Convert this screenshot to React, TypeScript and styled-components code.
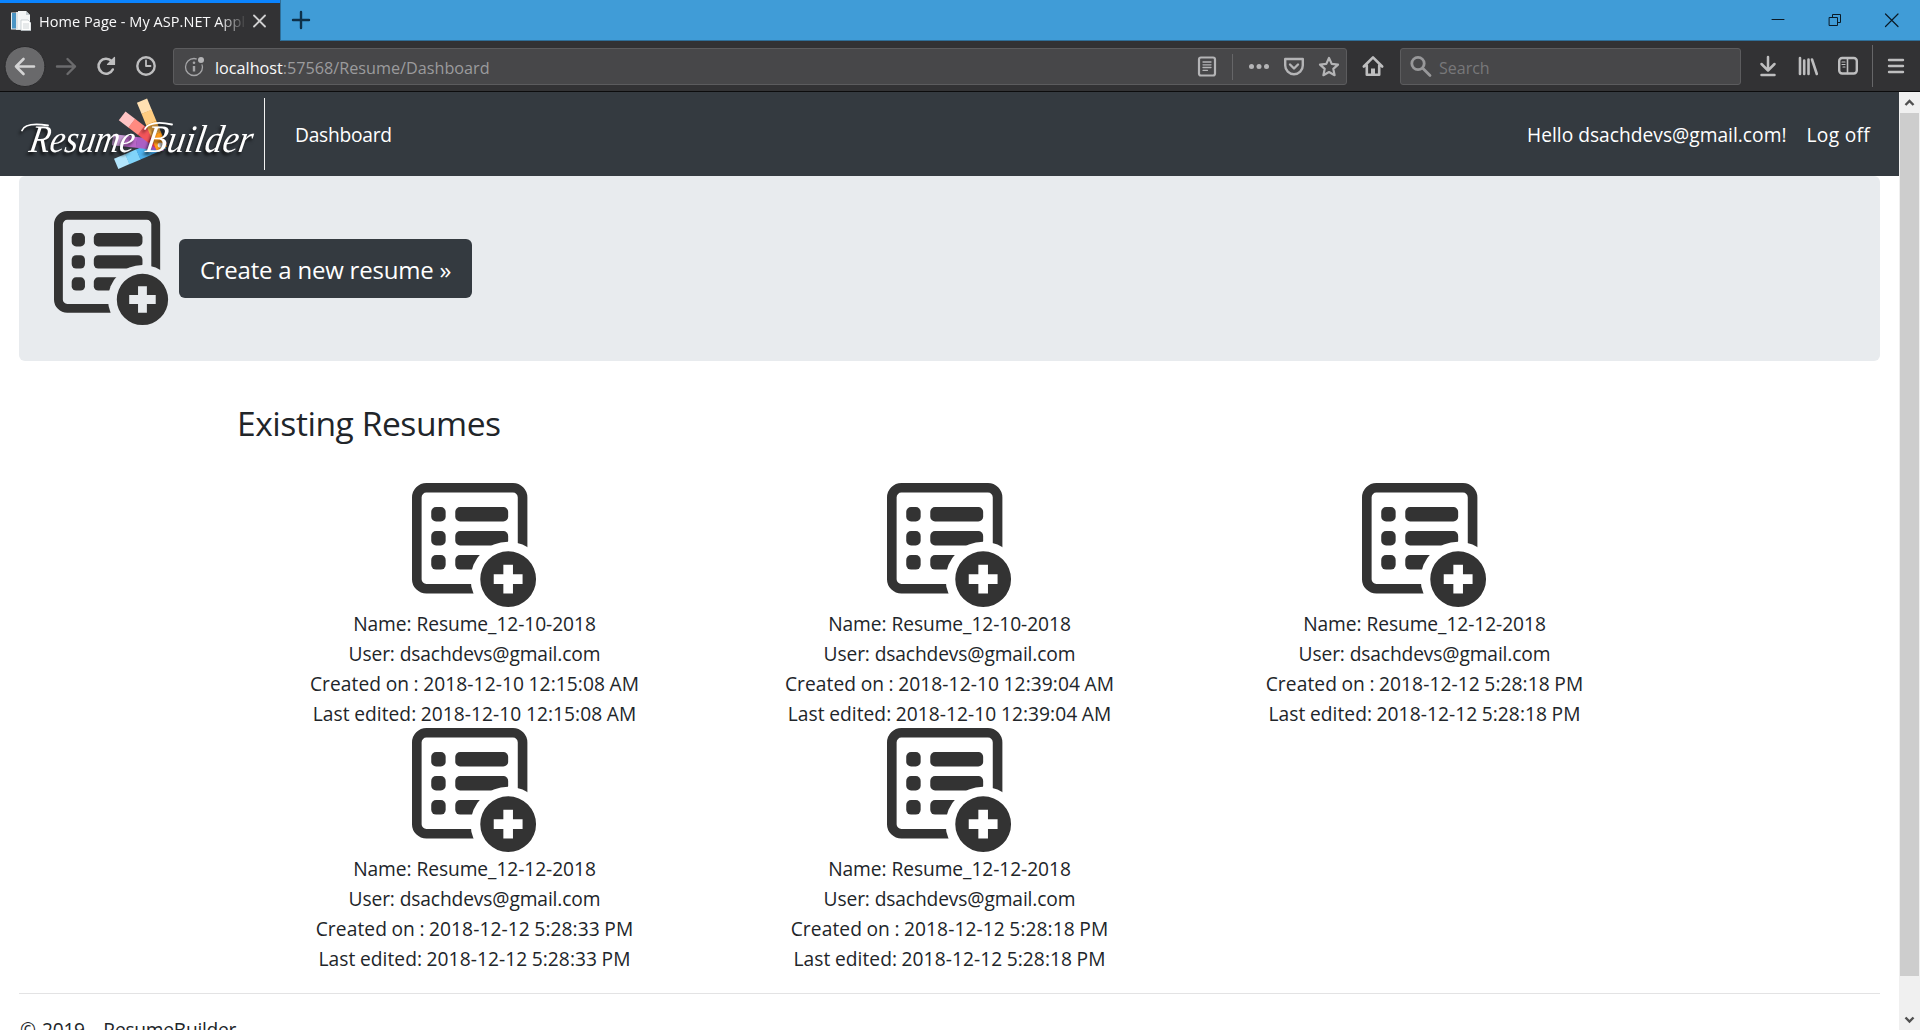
import React from "react";
import styled, { createGlobalStyle } from "styled-components";

const GlobalStyle = createGlobalStyle`
  *, *::before, *::after { box-sizing: border-box; }
  html, body { margin: 0; padding: 0; background: #fff; overflow: hidden; }
  body { font-family: "Open Sans", "Noto Sans", sans-serif; color: #212529; }
  svg { display: block; flex: none; }
`;

const Window = styled.div`
  display: flex;
  flex-direction: column;
  width: 1920px;
  height: 1030px;
  overflow: hidden;
`;

/* ---------- browser chrome ---------- */

const TitleBar = styled.header`
  display: flex;
  height: 41px;
  background: #409cd7;
`;

const Tab = styled.div`
  display: flex;
  align-items: center;
  width: 280px;
  padding: 0 11px 0 11px;
  border-top: 3px solid #0a84ff;
  background: #323234;
`;

const TabTitle = styled.span`
  width: 208px;
  margin: 0 5px 1px 8px;
  overflow: hidden;
  white-space: nowrap;
  font-size: 14.5px;
  line-height: 24px;
  letter-spacing: 0.05px;
  color: #f9f9fa;
  mask-image: linear-gradient(to right, #000 180px, transparent 208px);
`;

const TabStrip = styled.div`
  display: flex;
  flex: 1;
  align-items: center;
  border-left: 1px solid #2f6f99;
  border-bottom: 1px solid #2f6f99;
  padding: 0 16px 0 8px;
`;

const WindowButtons = styled.div`
  display: flex;
  gap: 33px;
  margin-left: auto;
`;

const Toolbar = styled.div`
  display: flex;
  align-items: center;
  height: 51px;
  padding-left: 4px;
  background: #323234;
  border-bottom: 1px solid #0c0c0d;
`;

const Slot = styled.span<{ $left?: number }>`
  flex: none;
  margin-left: ${(p) => p.$left ?? 0}px;
`;

const Field = styled.div<{ $width: number }>`
  display: flex;
  align-items: center;
  flex: none;
  width: ${(p) => p.$width}px;
  height: 37px;
  margin: 1px 0 0 15px;
  padding: 0 5px 0 8px;
  background: #474749;
  border: 1px solid #5c5c5e;
  border-radius: 3px;
`;

const Url = styled.span`
  flex: 1;
  margin: 2px 0 0 9px;
  font-size: 16.2px;
  line-height: 24px;
  color: #9b9b9d;
`;

const Host = styled.span`
  color: #f9f9fa;
`;

const Placeholder = styled.span`
  margin: 2px 0 0 6px;
  font-size: 16px;
  line-height: 24px;
  color: #78787a;
`;

const Divider = styled.span<{ $height: number; $left: number; $right: number }>`
  width: 1px;
  height: ${(p) => p.$height}px;
  margin: 0 ${(p) => p.$right}px 0 ${(p) => p.$left}px;
  background: #666668;
`;

/* ---------- page ---------- */

const Viewport = styled.div`
  display: flex;
  flex: 1;
  min-height: 0;
`;

const Page = styled.div`
  flex: 1;
  overflow: hidden;
  background: #fff;
`;

const Navbar = styled.nav`
  display: flex;
  align-items: center;
  height: 84px;
  padding: 0 29px 0 19px;
  background: #343a40;
`;

const Brand = styled.a`
  display: block;
  width: 246px;
  height: 72px;
  border-right: 1px solid #f1f1f1;
`;

const NavText = styled.a<{ $left: number; $track?: number }>`
  margin-left: ${(p) => p.$left}px;
  padding-top: 1px;
  font-size: 19.2px;
  line-height: 30px;
  letter-spacing: ${(p) => p.$track ?? 0}px;
  color: #fff;
  white-space: nowrap;
`;

const Account = styled.div`
  display: flex;
  margin-left: auto;
`;

const Body = styled.main`
  padding: 0 19px;
`;

const Jumbotron = styled.section`
  display: flex;
  align-items: center;
  gap: 10px;
  height: 185px;
  padding: 0 35px 0;
  border-radius: 6px;
  background: #e8ebee;
`;

const CreateButton = styled.a`
  width: 293px;
  height: 59px;
  padding-top: 2px;
  border-radius: 6px;
  background: #343a40;
  color: #fff;
  font-size: 24px;
  line-height: 58px;
  letter-spacing: -0.22px;
  text-align: center;
`;

const Container = styled.section`
  width: 1425px;
  margin: 41px 0 0 218px;
`;

const Heading = styled.h2`
  margin: 0 0 39px;
  font-size: 33.6px;
  font-weight: 400;
  line-height: 42px;
  letter-spacing: -0.45px;
`;

const Grid = styled.div`
  display: grid;
  grid-template-columns: repeat(3, 475px);
  grid-auto-rows: 245px;
`;

const Card = styled.article`
  display: flex;
  flex-direction: column;
  align-items: center;
`;

const CardLine = styled.div<{ $track: number; $words?: number }>`
  position: relative;
  top: 1px;
  font-size: 19.2px;
  line-height: 30px;
  letter-spacing: ${(p) => p.$track}px;
  word-spacing: ${(p) => p.$words ?? 0}px;
  white-space: nowrap;
`;

const Rule = styled.hr`
  height: 1px;
  margin: 20px 0;
  border: 0;
  background: #e3e3e4;
`;

const Footer = styled.footer`
  padding: 1px 0 0 1px;
  font-size: 19.2px;
  line-height: 30px;
  letter-spacing: -0.27px;
  word-spacing: 1.6px;
`;

const Scrollbar = styled.div`
  display: flex;
  flex-direction: column;
  align-items: center;
  justify-content: space-between;
  width: 21px;
  padding: 0 1px;
  background: #f0f0f0;
`;

const Thumb = styled.div`
  width: 19px;
  height: 863px;
  margin-bottom: 33px;
  background: #cdcdcd;
`;

/* ---------- drawings ---------- */

const Icon = ({ size = 24, color = "#bebebf", width = 2.4, children }: {
  size?: number; color?: string; width?: number; children: React.ReactNode;
}) => (
  <svg width={size} height={size} viewBox={`0 0 ${size} ${size}`} fill="none" stroke={color}
    strokeWidth={width} strokeLinecap="round" strokeLinejoin="round">
    {children}
  </svg>
);

const FaviconDrawing = styled.svg`
  margin-bottom: 3px;
`;

const Favicon = () => (
  <FaviconDrawing width="20" height="20" viewBox="0 0 20 20">
    <rect x="0" y="1.5" width="10" height="17" fill="#e9eef2" />
    <rect x="1" y="2" width="4" height="15.5" fill="#4b94c4" />
    <path d="M5 1h9l4 4v14H5z" fill="#dfe3e6" />
    <path d="M7 0h8l4 4v14H7z" fill="#f3f5f6" />
    <path d="M15 0v4h4z" fill="#c3cbd0" />
    <path d="M10 9h7l3 3v7.500H10z" fill="#fdfdfd" stroke="#b9c1c6" strokeWidth=".7" />
    <path d="M12 13h6M12 15h6M12 17h6" stroke="#c4cace" strokeWidth=".8" />
  </FaviconDrawing>
);

const ResumeIcon = ({ size, id }: { size: number; id: string }) => (
  <svg width={size} height={size} viewBox="0 0 26 26" fill="#333">
    <mask id={id}>
      <rect width="26" height="26" fill="#fff" />
      <circle cx="20" cy="20" r="7.8" fill="#000" />
    </mask>
    <g mask={`url(#${id})`}>
      <path fillRule="evenodd" d="M3 0h18a3 3 0 0 1 3 3v17a3 3 0 0 1-3 3H3a3 3 0 0 1-3-3V3a3 3 0 0 1 3-3zm0 2a1 1 0 0 0-1 1v17a1 1 0 0 0 1 1h18a1 1 0 0 0 1-1V3a1 1 0 0 0-1-1z" />
      {[5, 10, 15].map((y) => (
        <React.Fragment key={y}>
          <rect x="4" y={y} width="3" height="3" rx="1" />
          <rect x="9" y={y} width="11" height="3" rx="1" />
        </React.Fragment>
      ))}
    </g>
    <path fillRule="evenodd" d="M20 14.200a5.800 5.800 0 1 1 0 11.600a5.800 5.800 0 1 1 0-11.600zM19 17v2h-2v2h2v2h2v-2h2v-2h-2v-2z" />
  </svg>
);

const swatches = [
  { angle: -23.2, tones: ["#b3e5fc", "#81d4fa", "#4fb4f0", "#42a5e8"] },
  { angle: 6.3, tones: ["#c79bd6", "#ba68c8", "#ab5fc4", "#9c4fb8"] },
  { angle: 37.4, tones: ["#ffc4c4", "#ff8a80", "#f2555a", "#e53948"] },
  { angle: 67.6, tones: ["#ffe0b2", "#ffcc80", "#ffb547", "#ff9c1a"] },
];

const LogoText = styled.text`
  font-family: "Liberation Serif", serif;
  font-style: italic;
  font-size: 39px;
  fill: #fff;
`;

const LogoDrawing = styled.svg`
  margin-top: -4px;
  overflow: visible;
`;

const Lettering = styled.g`
  filter: drop-shadow(-2px 3px 1.5px rgba(0, 0, 0, 0.65));
`;

const Logo = () => (
  <LogoDrawing width="240" height="76" viewBox="19 94 240 76">
    <g transform="translate(160.3 145)">
      {swatches.map(({ angle, tones }) => (
        <g key={angle} transform={`rotate(${angle})`}>
          {tones.map((tone, i) => (
            <rect key={tone} x={-48 + i * 12} y="-5.500" width={i === 3 ? 16 : 12.3} height="11" fill={tone} />
          ))}
        </g>
      ))}
      <circle r="5.500" fill="#ff9c1a" />
      <circle r="2.600" fill="#fff" />
    </g>
    <Lettering>
      <g transform="translate(0 151.5) skewX(-10)">
        <LogoText x="28" y="0" textLength="105" lengthAdjust="spacingAndGlyphs">Resume</LogoText>
        <LogoText x="144" y="0" textLength="107" lengthAdjust="spacingAndGlyphs">Builder</LogoText>
      </g>
      <path d="M22 130.500C24 125.500 32 123 48 125.500M145 129C147 124 156 121 172 124.500" fill="none" stroke="#fff"
        strokeWidth="1.800" strokeLinecap="round" />
    </Lettering>
  </LogoDrawing>
);

/* ---------- data ---------- */

const resumes = [
  { name: "Resume_12-10-2018", stamp: "2018-12-10 12:15:08 AM" },
  { name: "Resume_12-10-2018", stamp: "2018-12-10 12:39:04 AM" },
  { name: "Resume_12-12-2018", stamp: "2018-12-12 5:28:18 PM" },
  { name: "Resume_12-12-2018", stamp: "2018-12-12 5:28:33 PM" },
  { name: "Resume_12-12-2018", stamp: "2018-12-12 5:28:18 PM" },
];

export default function App() {
  return (
    <Window>
      <GlobalStyle />
      <TitleBar>
        <Tab>
          <Favicon />
          <TabTitle>Home Page - My ASP.NET Appl</TabTitle>
          <Icon size={18} width={1.8} color="#d0d0d1"><path d="M3 2.500l11 11M14 2.500L3 13.500" /></Icon>
        </Tab>
        <TabStrip>
          <Icon color="#0d3049" width={2.4}><path d="M12 4v16M4 12h16" /></Icon>
          <WindowButtons>
            <Icon color="#0a1a26" width={1}><path d="M6 11.500h12" /></Icon>
            <Icon color="#0a1a26" width={1}><path d="M6.500 9.500h8v8h-8zM9.500 9.500v-3h8v8h-3" /></Icon>
            <Icon color="#0a1a26" width={1.2}><path d="M5.500 6l12.500 12.500M18 6L5.500 18.500" /></Icon>
          </WindowButtons>
        </TabStrip>
      </TitleBar>

      <Toolbar>
        <Slot>
          <Icon size={42} width={2.6} color="#d3d3d4">
            <circle cx="21" cy="21.500" r="20" fill="#69696b" stroke="#2a2a2c" strokeWidth="1" />
            <path d="M12 21.500h18M19.500 14l-7.500 7.500 7.500 7.500" />
          </Icon>
        </Slot>
        <Slot $left={8}>
          <Icon color="#6b6b6d"><path d="M3 12.500h18M13.500 5l7.500 7.500-7.500 7.500" /></Icon>
        </Slot>
        <Slot $left={16}>
          <Icon width={2.6}>
            <path d="M18.800 15.500A7.500 7.500 0 1 1 17.500 7" />
            <path d="M20.500 3.500v7h-7z" fill="#bebebf" strokeWidth="1.200" />
          </Icon>
        </Slot>
        <Slot $left={16}>
          <Icon><circle cx="12" cy="12" r="8.700" /><path d="M12 6.500V12h4.500" strokeWidth="1.800" /></Icon>
        </Slot>

        <Field $width={1174}>
          <Icon color="#a5a5a7" width={1.3}>
            <circle cx="12" cy="12" r="8.500" />
            <circle cx="19" cy="5" r="4.500" fill="#474749" stroke="none" />
            <circle cx="19" cy="5" r="3" fill="#b4b4b6" stroke="none" />
            <path d="M12 11v5.500" strokeWidth="2.400" strokeLinecap="butt" />
            <circle cx="12" cy="7.800" r="1.300" fill="#a5a5a7" stroke="none" />
          </Icon>
          <Url><Host>localhost</Host>:57568/Resume/Dashboard</Url>
          <Icon color="#b4b4b6" width={2.2}>
            <rect x="3" y="2.500" width="16" height="18" rx="2" />
            <path d="M7 7h8M7 9.800h8M7 12.500h8M7 15.300h4.500" strokeWidth="1.300" />
          </Icon>
          <Divider $height={26} $left={12} $right={14} />
          <Icon color="#b4b4b6">
            {[4.5, 12, 19.5].map((x) => (
              <circle key={x} cx={x} cy="11.500" r="2.500" fill="#b4b4b6" stroke="none" />
            ))}
          </Icon>
          <Slot $left={11}>
            <Icon color="#b4b4b6">
              <path d="M3.200 4h17.600v6.500a8.800 8.800 0 0 1-17.600 0z" />
              <path d="M8 9.500l4 4 4-4" />
            </Icon>
          </Slot>
          <Slot $left={11}>
            <Icon color="#b4b4b6" width={2.2}>
              <path d="M12 3l2.700 5.900 6.300.7-4.700 4.300 1.300 6.300L12 17l-5.600 3.200 1.300-6.300L3 9.600l6.300-.7z" />
            </Icon>
          </Slot>
        </Field>

        <Slot $left={14}>
          <Icon width={2.6}>
            <path d="M2.800 12.500L12 3.400l9.200 9.100M5.800 11.500v9.200h12.400v-9.200" />
            <path d="M12 20.500v-6" strokeWidth="4" strokeLinecap="butt" />
          </Icon>
        </Slot>

        <Field $width={341}>
          <Icon color="#98989a" width={2.8}><circle cx="9" cy="8.500" r="6.200" /><path d="M14 13.500l7 7" /></Icon>
          <Placeholder>Search</Placeholder>
        </Field>

        <Slot $left={15}>
          <Icon width={2.5}><path d="M12 3v13M5.500 10l6.500 6.500 6.500-6.500M5.500 21h13" /></Icon>
        </Slot>
        <Slot $left={16}>
          <Icon width={2.6}><path d="M4 4v16M8.200 6.500V20M12.500 5.500V20M16 5.500L20.800 20" /></Icon>
        </Slot>
        <Slot $left={16}>
          <Icon width={2.4}>
            <rect x="3.200" y="4" width="17.600" height="15.500" rx="3" />
            <path d="M11.500 4v15.500" strokeWidth="1.600" />
            <path d="M6 8h3M6 10.500h3M7 13h2" strokeWidth="1.200" />
          </Icon>
        </Slot>
        <Divider $height={42} $left={12} $right={11} />
        <Icon width={2.4}><path d="M5 6h14M5 12h14M5 18h14" /></Icon>
      </Toolbar>

      <Viewport>
        <Page>
          <Navbar>
            <Brand><Logo /></Brand>
            <NavText $left={30} $track={-0.25}>Dashboard</NavText>
            <Account>
              <NavText $left={0} $track={0.01}>Hello dsachdevs@gmail.com!</NavText>
              <NavText $left={20} $track={0.3}>Log off</NavText>
            </Account>
          </Navbar>
          <Body>
            <Jumbotron>
              <ResumeIcon size={115} id="create" />
              <CreateButton>Create a new resume »</CreateButton>
            </Jumbotron>
            <Container>
              <Heading>Existing Resumes</Heading>
              <Grid>
                {resumes.map((r, i) => (
                  <Card key={i}>
                    <ResumeIcon size={125} id={`resume-${i}`} />
                    <CardLine $track={-0.07}>Name: {r.name}</CardLine>
                    <CardLine $track={-0.12}>User: dsachdevs@gmail.com</CardLine>
                    <CardLine $track={0.08} $words={-0.6}>Created on : {r.stamp}</CardLine>
                    <CardLine $track={0.05} $words={-0.5}>Last edited: {r.stamp}</CardLine>
                  </Card>
                ))}
              </Grid>
            </Container>
            <Rule />
            <Footer>© 2019 - ResumeBuilder</Footer>
          </Body>
        </Page>
        <Scrollbar>
          <Icon size={21} color="#505050" width={2.4}><path d="M6.500 13l4-4 4 4" strokeLinecap="butt" strokeLinejoin="miter" /></Icon>
          <Thumb />
          <Icon size={21} color="#505050" width={2.4}><path d="M6.500 8.500l4 4 4-4" strokeLinecap="butt" strokeLinejoin="miter" /></Icon>
        </Scrollbar>
      </Viewport>
    </Window>
  );
}
